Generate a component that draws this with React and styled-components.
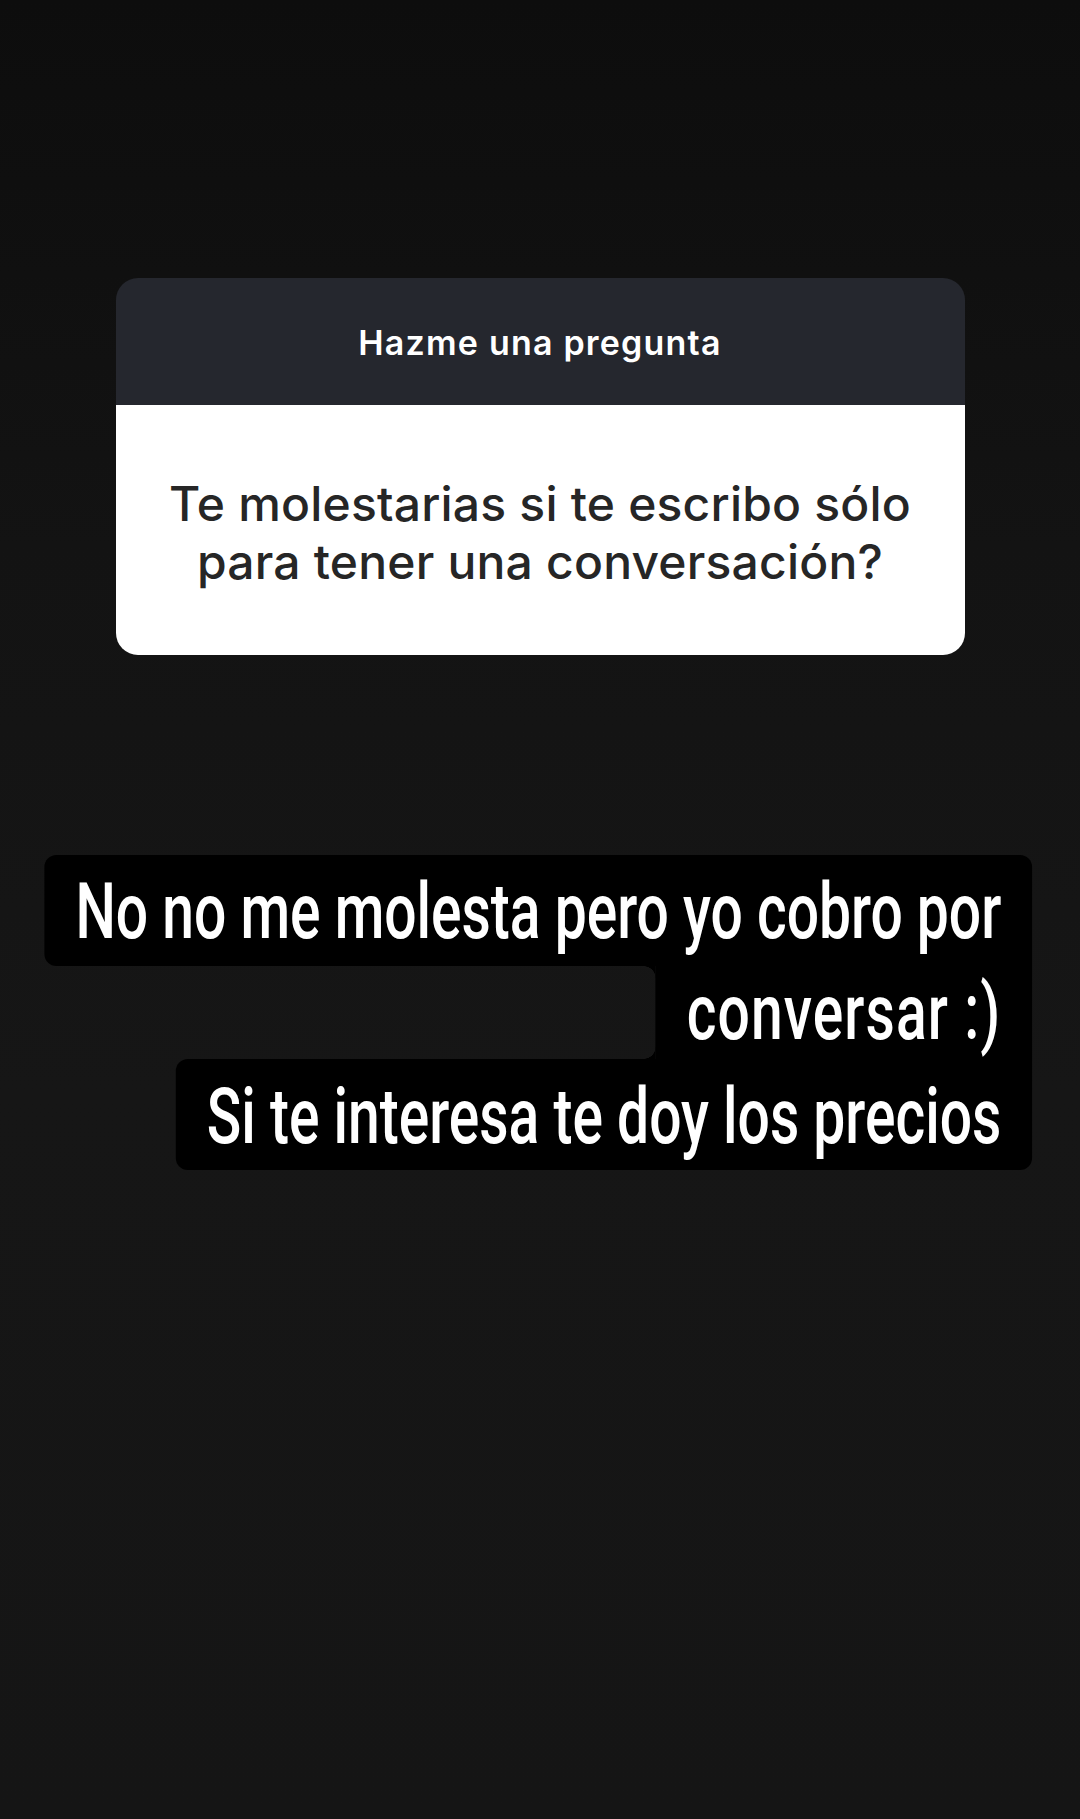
import React from "react";
import styled, { createGlobalStyle } from "styled-components";

const PAGE_BG = "#151515";
// the story caption font is a narrow grotesque; none is installed, so the
// caption block is drawn with Roboto and squeezed horizontally
const SQUEEZE = 0.73;
const R = 12;

const GlobalStyle = createGlobalStyle`
  html, body {
    margin: 0;
    padding: 0;
    background: ${PAGE_BG};
    overflow-x: hidden;
  }
  * {
    box-sizing: border-box;
  }
`;

const captionLines = [
  { text: "No no me molesta pero yo cobro por", position: "first" },
  { text: "conversar :)", position: "middle" },
  { text: "Si te interesa te doy los precios", position: "last" },
];

export default function App() {
  return (
    <>
      <GlobalStyle />
      <Page>
        <QuestionCard>
          <CardHeader>Hazme una pregunta</CardHeader>
          <CardBody>
            <Question>
              Te molestarias si te escribo sólo
              <br />
              para tener una conversación?
            </Question>
          </CardBody>
        </QuestionCard>

        <Caption>
          {captionLines.map((line) => (
            <CaptionLine key={line.text} $position={line.position}>
              {line.text}
            </CaptionLine>
          ))}
        </Caption>
      </Page>
    </>
  );
}

const Page = styled.div`
  width: 1080px;
  min-height: 1819px;
  overflow: hidden;
  background: linear-gradient(180deg, #0d0d0d 0%, #131313 30%, #161616 60%, #151515 100%);
  display: flex;
  flex-direction: column;
  align-items: center;
  padding-top: 278px;
`;

const QuestionCard = styled.div`
  width: 849px;
  border-radius: 22px;
  overflow: hidden;
  display: flex;
  flex-direction: column;
`;

const CardHeader = styled.div`
  height: 127px;
  background: #25272e;
  color: #ffffff;
  display: flex;
  align-items: center;
  justify-content: center;
  font-family: Inter, "Liberation Sans", sans-serif;
  font-weight: 600;
  font-size: 34px;
  letter-spacing: 1.2px;
  padding-top: 2px;
`;

const CardBody = styled.div`
  height: 250px;
  background: #ffffff;
  display: flex;
  align-items: center;
  justify-content: center;
`;

const Question = styled.p`
  margin: 0;
  text-align: center;
  color: #262626;
  font-family: Inter, "Liberation Sans", sans-serif;
  font-weight: 500;
  font-size: 48px;
  line-height: 58px;
  letter-spacing: 0.2px;
  padding-top: 6px;
`;

const Caption = styled.div`
  align-self: flex-end;
  margin-right: 48px;
  margin-top: 200px;
  display: flex;
  flex-direction: column;
  align-items: flex-end;
  transform: scaleX(${SQUEEZE});
  transform-origin: right center;
`;

const rx = R / SQUEEZE;
const px = 31 / SQUEEZE;

const radii = {
  first: `${rx}px ${rx}px 0 ${rx}px / ${R}px ${R}px 0 ${R}px`,
  middle: "0",
  last: `${rx}px 0 ${rx}px ${rx}px / ${R}px 0 ${R}px ${R}px`,
};

const paddings = {
  first: `10px ${px}px 8px`,
  middle: `0 ${px}px`,
  last: `11px ${px}px 7px`,
};

const CaptionLine = styled.div`
  position: relative;
  background: #000000;
  color: #ffffff;
  font-family: Roboto, "Liberation Sans", sans-serif;
  font-weight: 500;
  font-size: 78px;
  line-height: 93px;
  white-space: nowrap;
  letter-spacing: ${(p) => (p.$position === "middle" ? "1.5px" : "0")};
  padding: ${(p) => paddings[p.$position]};
  border-radius: ${(p) => radii[p.$position]};

  ${(p) =>
    p.$position === "middle" &&
    `
    &::before {
      content: "";
      position: absolute;
      right: 100%;
      top: 0;
      bottom: 0;
      width: ${rx}px;
      background:
        radial-gradient(ellipse ${rx}px ${R}px at 0 ${R}px, transparent 96%, #000 100%) top / ${rx}px ${R}px no-repeat,
        radial-gradient(ellipse ${rx}px ${R}px at 0 0, transparent 96%, #000 100%) bottom / ${rx}px ${R}px no-repeat;
    }
  `}
`;
